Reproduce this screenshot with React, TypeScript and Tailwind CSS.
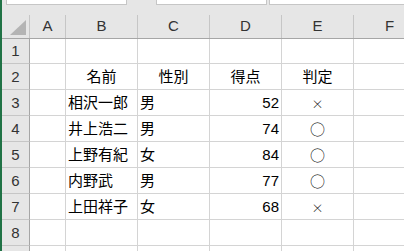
import React from "react";

type Cell = { t: string; a: "l" | "c" | "r" };

const colLetters = ["A", "B", "C", "D", "E", "F"];
const colW = ["w-[36px]", "w-[72px]", "w-[72px]", "w-[72px]", "w-[72px]", "w-[72px]"];

const data: (Cell | null)[][] = [
  [null, null, null, null, null, null],
  [null, { t: "名前", a: "c" }, { t: "性別", a: "c" }, { t: "得点", a: "c" }, { t: "判定", a: "c" }, null],
  [null, { t: "相沢一郎", a: "l" }, { t: "男", a: "l" }, { t: "52", a: "r" }, { t: "×", a: "c" }, null],
  [null, { t: "井上浩二", a: "l" }, { t: "男", a: "l" }, { t: "74", a: "r" }, { t: "○", a: "c" }, null],
  [null, { t: "上野有紀", a: "l" }, { t: "女", a: "l" }, { t: "84", a: "r" }, { t: "○", a: "c" }, null],
  [null, { t: "内野武", a: "l" }, { t: "男", a: "l" }, { t: "77", a: "r" }, { t: "○", a: "c" }, null],
  [null, { t: "上田祥子", a: "l" }, { t: "女", a: "l" }, { t: "68", a: "r" }, { t: "×", a: "c" }, null],
  [null, null, null, null, null, null],
  [null, null, null, null, null, null],
];

const font = { fontFamily: '"Liberation Sans", "Noto Sans CJK JP", sans-serif' };
const circle = { fontFamily: '"Noto Sans CJK JP", sans-serif', fontWeight: 300 };
const cross = { fontFamily: '"Noto Sans CJK JP", sans-serif', fontWeight: 300, fontSize: "12px" };

export default function App() {
  return (
    <div className="w-[404px] h-[251px] overflow-hidden bg-[#e6e6e6] flex" style={font}>
      <div className="w-[2px] h-full bg-[#217346] shrink-0" />
      <div className="flex-1 flex flex-col min-w-0">
        {/* formula bar remnant */}
        <div className="h-[14px] flex items-start shrink-0">
          <div className="ml-[4px] w-[121px] h-[5px] bg-white border-x border-b border-[#c6c6c6]" />
          <div className="ml-[29px] w-[111px] h-[5px] bg-white border-x border-b border-[#c6c6c6]" />
          <div className="ml-[2px] flex-1 h-[5px] bg-white border-l border-b border-[#c6c6c6]" />
        </div>
        {/* column header */}
        <div className="h-[25px] flex border-b border-[#a6a6a6] shrink-0 pt-[1px]">
          <div className="w-[28px] h-full border-r border-[#c6c6c6] relative shrink-0">
            <div
              className="absolute left-[8px] top-[5px] w-[16px] h-[15px] bg-[#b4b4b4]"
              style={{ clipPath: "polygon(100% 0, 100% 100%, 0 100%)" }}
            />
          </div>
          {colLetters.map((c, i) => (
            <div
              key={c}
              className={`${colW[i]} h-full shrink-0 border-r border-[#c6c6c6] flex items-center justify-center text-[15px] text-[#333]`}
            >
              {c}
            </div>
          ))}
        </div>
        {/* rows */}
        {data.map((row, r) => (
          <div key={r} className={`flex shrink-0 ${r === 0 ? "h-[25px]" : "h-[26px]"}`}>
            <div className="w-[28px] h-full shrink-0 bg-[#e6e6e6] border-r border-b border-r-[#a6a6a6] border-b-[#c6c6c6] flex items-center justify-center text-[15px] text-[#333] pt-[1px]">
              {r < 8 ? r + 1 : ""}
            </div>
            {row.map((cell, i) => (
              <div
                key={i}
                className={`${colW[i]} h-full shrink-0 bg-white border-r border-b border-[#d4d4d4] flex items-center pt-[2px] text-[15px] text-black whitespace-nowrap overflow-hidden ${
                  cell?.a === "c" ? "justify-center" : cell?.a === "r" ? "justify-end pr-[2px]" : "justify-start pl-[2px]"
                }`}
                style={cell?.t === "○" ? circle : cell?.t === "×" ? cross : undefined}
              >
                {cell?.t ?? ""}
              </div>
            ))}
          </div>
        ))}
      </div>
    </div>
  );
}
